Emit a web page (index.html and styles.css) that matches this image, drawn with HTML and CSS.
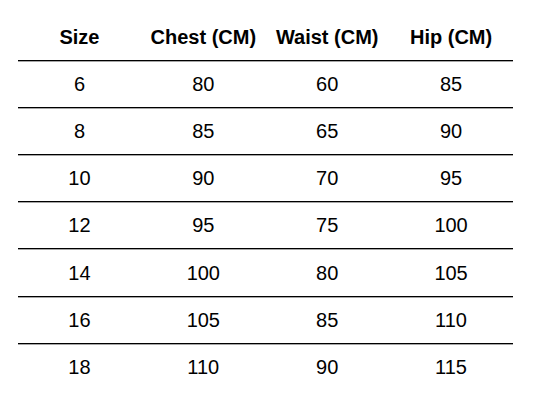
FILE: index.html
```html
<!DOCTYPE html>
<html lang="en">
<head>
<meta charset="utf-8">
<title>Size Chart</title>
<link rel="stylesheet" href="styles.css">
</head>
<body>
<div class="page">
  <div class="chart">
    <div class="row head">
      <div class="cell">Size</div>
      <div class="cell">Chest (CM)</div>
      <div class="cell">Waist (CM)</div>
      <div class="cell">Hip (CM)</div>
    </div>
    <div class="row"><div class="cell">6</div><div class="cell">80</div><div class="cell">60</div><div class="cell">85</div></div>
    <div class="row"><div class="cell">8</div><div class="cell">85</div><div class="cell">65</div><div class="cell">90</div></div>
    <div class="row"><div class="cell">10</div><div class="cell">90</div><div class="cell">70</div><div class="cell">95</div></div>
    <div class="row"><div class="cell">12</div><div class="cell">95</div><div class="cell">75</div><div class="cell">100</div></div>
    <div class="row"><div class="cell">14</div><div class="cell">100</div><div class="cell">80</div><div class="cell">105</div></div>
    <div class="row"><div class="cell">16</div><div class="cell">105</div><div class="cell">85</div><div class="cell">110</div></div>
    <div class="row last"><div class="cell">18</div><div class="cell">110</div><div class="cell">90</div><div class="cell">115</div></div>
  </div>
</div>
</body>
</html>
```

FILE: styles.css
```css
html, body {
  margin: 0;
  padding: 0;
  background: #ffffff;
}

.page {
  padding: 13.5px 22px 0 17.5px;
  font-family: "Liberation Sans", Arial, Helvetica, sans-serif;
  color: #000;
}

.chart {
  width: 495.5px;
  display: flex;
  flex-direction: column;
}

.row {
  display: grid;
  grid-template-columns: repeat(4, 1fr);
  height: 47.2px;
  box-sizing: border-box;
  border-bottom: 1px solid #000;
  box-shadow: 0 1px 0 rgba(0, 0, 0, 0.35);
  align-items: center;
}

.row.last {
  border-bottom: none;
  box-shadow: none;
}

.cell {
  text-align: center;
  font-size: 20px;
  line-height: 1;
}

.head .cell {
  font-weight: bold;
}
```
